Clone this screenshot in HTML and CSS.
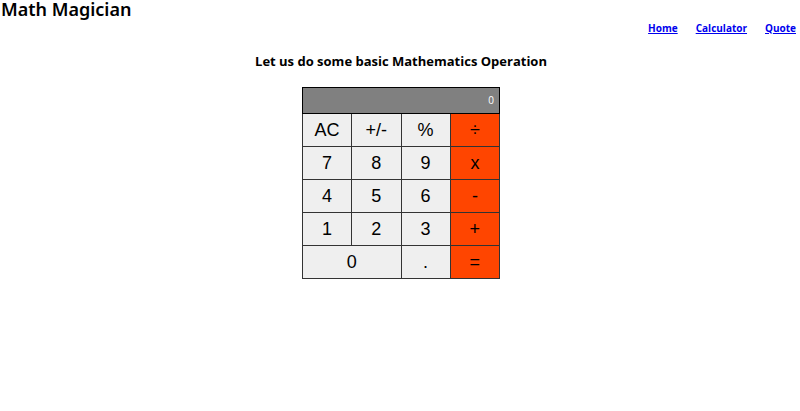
FILE: index.html
```html
<!DOCTYPE html>
<html lang="en">
<head>
<meta charset="utf-8">
<meta name="viewport" content="width=device-width, initial-scale=1">
<title>Math Magician</title>
<link rel="stylesheet" href="styles.css">
</head>
<body>
<header>
  <h1 class="brand">Math Magician</h1>
  <nav class="nav">
    <a href="#home">Home</a>
    <a href="#calculator">Calculator</a>
    <a href="#quote">Quote</a>
  </nav>
</header>
<main class="page">
  <h2 class="heading">Let us do some basic Mathematics Operation</h2>
  <section class="calculator">
    <output class="display">0</output>
    <div class="keys">
      <button type="button">AC</button>
      <button type="button">+/-</button>
      <button type="button">%</button>
      <button type="button" class="operator">÷</button>
      <button type="button">7</button>
      <button type="button">8</button>
      <button type="button">9</button>
      <button type="button" class="operator">x</button>
      <button type="button">4</button>
      <button type="button">5</button>
      <button type="button">6</button>
      <button type="button" class="operator">-</button>
      <button type="button">1</button>
      <button type="button">2</button>
      <button type="button">3</button>
      <button type="button" class="operator">+</button>
      <button type="button" class="wide">0</button>
      <button type="button">.</button>
      <button type="button" class="operator">=</button>
    </div>
  </section>
</main>
</body>
</html>
```
FILE: styles.css
```css
* {
  box-sizing: border-box;
}

body {
  margin: 0;
  background: #fff;
  color: #000;
  font-family: "Open Sans", "Noto Sans", sans-serif;
}

.brand {
  margin: 0;
  padding-left: 1px;
  font-family: "Noto Sans", "Open Sans", sans-serif;
  font-size: 18px;
  font-weight: 600;
  line-height: 18px;
}

.nav {
  display: flex;
  justify-content: flex-end;
  gap: 18px;
  padding-right: 4px;
  font-size: 10px;
  font-weight: 700;
  line-height: 20px;
}

.nav a {
  color: #0000ee;
}

.page {
  padding-left: 2px;
}

.heading {
  margin: 14px 0 16px;
  font-size: 13px;
  font-weight: 700;
  line-height: 19px;
  text-align: center;
}

.calculator {
  width: 198px;
  margin: 0 auto;
}

.display {
  display: block;
  padding: 0 5px;
  border: 1px solid #000;
  background: #808080;
  color: #fff;
  font-size: 10px;
  line-height: 25px;
  text-align: right;
}

.keys {
  display: grid;
  grid-template-columns: repeat(4, 1fr);
  grid-auto-rows: 32px;
  gap: 1px;
  padding: 0 1px 1px;
  background: #333;
}

.keys button {
  min-width: 0;
  margin: 0;
  padding: 0;
  border: 0;
  background: #efefef;
  color: #000;
  font-family: "Liberation Sans", Arial, sans-serif;
  font-size: 18px;
}

.keys .operator {
  background: #ff4500;
}

.keys .wide {
  grid-column: span 2;
}
```
